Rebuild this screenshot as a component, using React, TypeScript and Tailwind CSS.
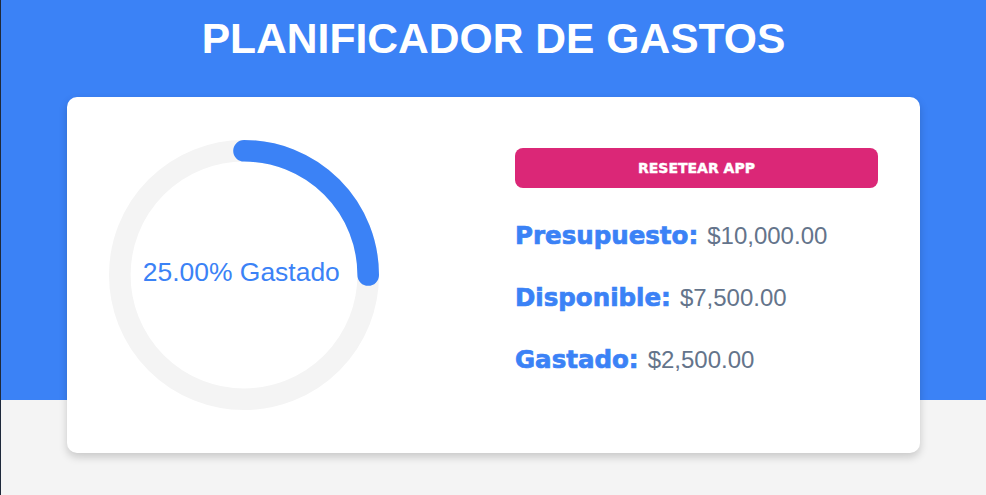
import React from "react";

const rows = [
  { label: "Presupuesto:", value: "$10,000.00" },
  { label: "Disponible:", value: "$7,500.00" },
  { label: "Gastado:", value: "$2,500.00" },
];

export default function App() {
  return (
    <div className="min-h-screen bg-[#f4f4f4] border-l border-[#1e293b] font-['Liberation_Sans',Arial,sans-serif]">
      <header className="bg-[#3b82f6] pt-[17px] pb-[340px]">
        <h1 className="text-center text-white font-bold text-[42.6px] leading-none">
          PLANIFICADOR DE GASTOS
        </h1>
      </header>
      <div className="mx-auto -mt-[303px] w-[853px] bg-white rounded-[10px] shadow-[0_4px_8px_rgba(0,0,0,0.18)] grid grid-cols-2 gap-[43px] px-[42px] py-[43px]">
        <div className="flex">
          <svg width="270" height="270" viewBox="0 0 100 100">
            <circle cx="50" cy="50" r="46" fill="none" stroke="#f4f4f4" strokeWidth="8" />
            <path
              d="M 50 4 A 46 46 0 0 1 96 50"
              fill="none"
              stroke="#3b82f6"
              strokeWidth="8"
              strokeLinecap="round"
            />
            <text
              x="49"
              y="52.2"
              textAnchor="middle"
              fontSize="9.8"
              fill="#3b82f6"
              fontFamily="'Liberation Sans', Arial, sans-serif"
            >
              25.00% Gastado
            </text>
          </svg>
        </div>
        <div className="flex flex-col pt-[8px]">
          <button className="w-full h-[40px] rounded-[8px] bg-[#db2777] text-white text-sm font-bold uppercase font-['DejaVu_Sans',sans-serif] [-webkit-text-stroke:0.4px_white]">
            Resetear App
          </button>
          <div className="flex flex-col gap-[30px] mt-[32px]">
            {rows.map((r) => (
              <p key={r.label} className="leading-[32px] flex items-baseline">
                <span className="font-['DejaVu_Sans',sans-serif] font-bold text-[24.5px] text-[#3b82f6] [-webkit-text-stroke:0.7px_#3b82f6]">
                  {r.label}
                </span>
                <span className="ml-[9px] text-[24px] text-[#64748b]">{r.value}</span>
              </p>
            ))}
          </div>
        </div>
      </div>
    </div>
  );
}
